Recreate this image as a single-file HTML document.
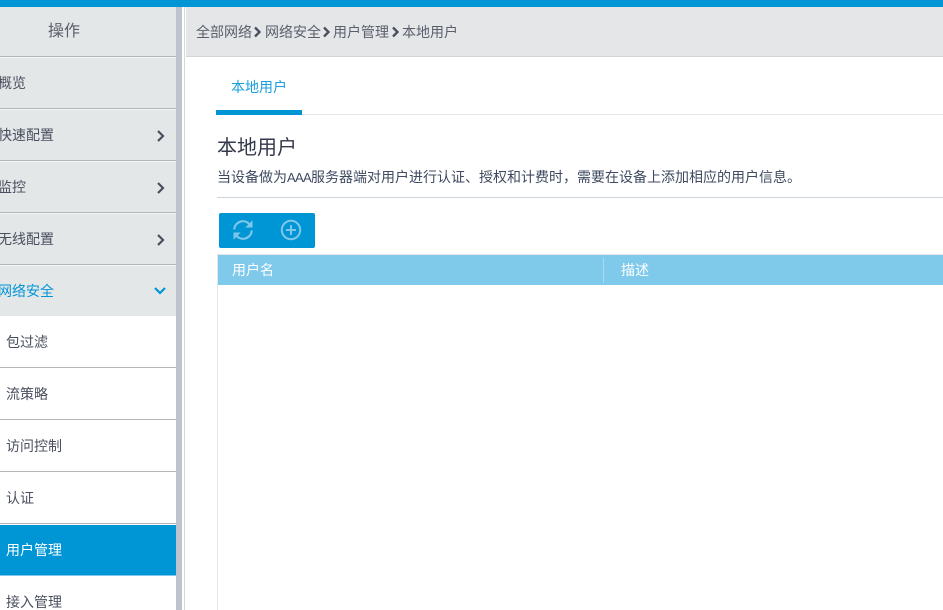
<!DOCTYPE html>
<html lang="zh">
<head>
<meta charset="utf-8">
<style>
html,body{margin:0;padding:0;width:943px;height:610px;overflow:hidden;background:#fff}
body{position:relative;font-family:"Liberation Sans","Microsoft YaHei","Noto Sans CJK SC","WenQuanYi Zen Hei",sans-serif;font-size:14px;color:#4a4f5e}
div{position:absolute;box-sizing:border-box;white-space:nowrap}
svg{position:absolute;display:block}
.t{line-height:20px}
.sep{left:0;width:176px;height:1px;background:#b5b5b5}
.sep2{left:0;width:176px;height:1px;background:#f4f5f5}
</style>
</head>
<body>
<div style="left:0;top:0;width:943px;height:7px;background:#0096d6"></div>
<div style="left:0;top:7px;width:176px;height:309px;background:#e4e7e8"></div>
<div style="left:176px;top:7px;width:6px;height:603px;background:#bdc4cd"></div>
<div style="left:184px;top:7px;width:1px;height:603px;background:#d4d7db"></div>
<div style="left:186px;top:7px;width:757px;height:49px;background:#e4e6e8"></div>
<div style="left:186px;top:56px;width:757px;height:1px;background:#d3d5d9"></div>

<div class="t" style="left:48px;top:22px;font-size:16px;color:#5a5f6b">操作</div>
<div class="sep" style="top:56px"></div><div class="sep2" style="top:57px"></div>
<div class="t" style="left:-2px;top:73px">概览</div>
<div class="sep" style="top:108px"></div><div class="sep2" style="top:109px"></div>
<div class="t" style="left:-2px;top:125px">快速配置</div>
<svg style="left:156px;top:129px" width="10" height="14" viewBox="0 0 10 14"><path d="M2 2l5 5-5 5" fill="none" stroke="#4a4f5e" stroke-width="2.2"/></svg>
<div class="sep" style="top:160px"></div><div class="sep2" style="top:161px"></div>
<div class="t" style="left:-2px;top:177px">监控</div>
<svg style="left:156px;top:181px" width="10" height="14" viewBox="0 0 10 14"><path d="M2 2l5 5-5 5" fill="none" stroke="#4a4f5e" stroke-width="2.2"/></svg>
<div class="sep" style="top:212px"></div><div class="sep2" style="top:213px"></div>
<div class="t" style="left:-2px;top:229px">无线配置</div>
<svg style="left:156px;top:233px" width="10" height="14" viewBox="0 0 10 14"><path d="M2 2l5 5-5 5" fill="none" stroke="#4a4f5e" stroke-width="2.2"/></svg>
<div class="sep" style="top:264px"></div><div class="sep2" style="top:265px"></div>
<div class="t" style="left:-2px;top:281px;color:#0096d6">网络安全</div>
<svg style="left:153px;top:286px" width="14" height="10" viewBox="0 0 14 10"><path d="M2 2l5 5 5-5" fill="none" stroke="#0096d6" stroke-width="2.2"/></svg>

<div class="t" style="left:6px;top:332px">包过滤</div>
<div class="sep" style="top:367px"></div>
<div class="t" style="left:6px;top:384px">流策略</div>
<div class="sep" style="top:419px"></div>
<div class="t" style="left:6px;top:436px">访问控制</div>
<div class="sep" style="top:471px"></div>
<div class="t" style="left:6px;top:488px">认证</div>
<div class="sep" style="top:523px"></div>
<div style="left:0;top:525px;width:176px;height:50px;background:#0096d6"></div>
<div class="t" style="left:6px;top:540px;color:#fff">用户管理</div>
<div style="left:0;top:575px;width:176px;height:1px;background:#7fc6e8"></div>
<div class="t" style="left:6px;top:592px">接入管理</div>

<div class="t" style="left:196px;top:22px;color:#5a5f6b">全部网络</div>
<svg style="left:253px;top:26px" width="10" height="12" viewBox="0 0 10 12"><path d="M2 1.500l4.500 4.500-4.500 4.500" fill="none" stroke="#4a4f5e" stroke-width="2.300"/></svg>
<div class="t" style="left:265px;top:22px;color:#5a5f6b">网络安全</div>
<svg style="left:322px;top:26px" width="10" height="12" viewBox="0 0 10 12"><path d="M2 1.500l4.500 4.500-4.500 4.500" fill="none" stroke="#4a4f5e" stroke-width="2.300"/></svg>
<div class="t" style="left:333px;top:22px;color:#5a5f6b">用户管理</div>
<svg style="left:391px;top:26px" width="10" height="12" viewBox="0 0 10 12"><path d="M2 1.500l4.500 4.500-4.500 4.500" fill="none" stroke="#4a4f5e" stroke-width="2.300"/></svg>
<div class="t" style="left:402px;top:22px;color:#5a5f6b">本地用户</div>

<div class="t" style="left:231px;top:77px;color:#1a9fdc">本地用户</div>
<div style="left:216px;top:114px;width:727px;height:1px;background:#e4e6e8"></div>
<div style="left:216px;top:110px;width:86px;height:5px;background:#0096d6"></div>

<div style="left:217px;top:135px;font-size:20px;line-height:26px;color:#33384a">本地用户</div>
<div class="t" style="left:217px;top:167px;font-size:14px;color:#3f4a60">当设备做为<span style="font-size:13px;letter-spacing:-.67px">AAA</span>服务器端对用户进行认证、授权和计费时，需要在设备上添加相应的用户信息。</div>
<div style="left:217px;top:197px;width:726px;height:1px;background:#cdd5dc"></div>

<div style="left:219px;top:213px;width:96px;height:35px;background:#0096d6;border-radius:2px"></div>
<svg style="left:232px;top:219px" width="22" height="22" viewBox="0 0 22 22" fill="none" stroke="#7fc6e8" stroke-width="2.200">
<path d="M2.200 10.500A8.800 8.800 0 0 1 17.200 4.800"/><path d="M20 2.500V8h-5.500z" fill="#7fc6e8" stroke-width="1"/>
<path d="M19.800 11.500A8.800 8.800 0 0 1 4.800 17.200"/><path d="M2 19.500V14h5.500z" fill="#7fc6e8" stroke-width="1"/>
</svg>
<svg style="left:280px;top:219px" width="22" height="22" viewBox="0 0 22 22" fill="none" stroke="#7fc6e8" stroke-width="2">
<circle cx="11" cy="11" r="9.200"/><path d="M11 6v10M6 11h10"/>
</svg>

<div style="left:217px;top:254px;width:726px;height:356px;border-left:1px solid #e4e6e8;border-top:1px solid #e4e6e8"></div>
<div style="left:218px;top:255px;width:725px;height:30px;background:#7fc9eb"></div>
<div class="t" style="left:232px;top:260px;color:#fff">用户名</div>
<div style="left:603px;top:258px;width:1px;height:25px;background:#a9daf0"></div>
<div class="t" style="left:621px;top:260px;color:#fff">描述</div>
</body>
</html>
